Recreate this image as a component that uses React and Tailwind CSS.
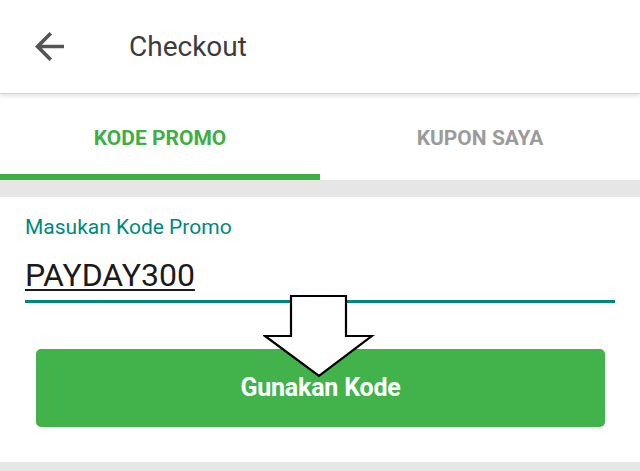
import React from 'react';

const BackArrow = () => (
  <svg width="29" height="29" viewBox="4 4 16 16" className="text-[#555555]">
    <path fill="currentColor" d="M20 11H7.83l5.59-5.59L12 4l-8 8 8 8 1.41-1.41L7.83 13H20v-2z" />
  </svg>
);

// hand-drawn annotation arrow over the button
const PointerArrow = () => (
  <svg width="112" height="84" viewBox="0 0 112 84" className="absolute left-[263px] top-[294px]">
    <polygon
      points="28,2 83,2 83,42 109,42 56,82 2,42 28,42"
      fill="white"
      stroke="black"
      strokeWidth="2.2"
      strokeLinejoin="miter"
    />
  </svg>
);

export default function App() {
  return (
    <div className="relative w-[640px] h-[471px] overflow-hidden bg-white font-['Roboto',sans-serif]">
      {/* Header */}
      <header className="relative z-10 h-[94px] flex items-center pl-[35px] bg-white border-b border-[#d4d4d4] shadow-[0_2px_4px_rgba(0,0,0,0.12)]">
        <BackArrow />
        <h1 className="ml-[65px] text-[28px] text-[#3c3c3c] leading-none">Checkout</h1>
      </header>

      {/* Tabs */}
      <div className="grid grid-cols-2 h-[86px]">
        <div className="flex flex-col">
          <div className="flex-1 flex items-center justify-center pt-[9px] text-[21px] font-bold text-[#3fae45]">
            KODE PROMO
          </div>
          <div className="h-[6px] bg-[#3fae45]" />
        </div>
        <div className="flex flex-col">
          <div className="flex-1 flex items-center justify-center pt-[9px] text-[21px] font-bold text-[#9b9b9b]">
            KUPON SAYA
          </div>
          <div className="h-[6px]" />
        </div>
      </div>

      <div className="h-[17px] bg-[#e6e6e6]" />

      {/* Promo form */}
      <div className="px-[25px] pt-[18px]">
        <label className="block text-[21px] leading-[25px] text-[#00897b]">Masukan Kode Promo</label>
        <div className="mt-[17px] text-[32px] leading-[36px] text-[#1a1a1a] underline underline-offset-[3px] decoration-[2px]">
          PAYDAY300
        </div>
        <div className="mt-[7px] h-[3px] bg-[#00897b]" />
      </div>

      <div className="pl-[36px] pr-[35px] pt-[46px]">
        <button className="w-full h-[78px] rounded-[5px] bg-[#42b34a] text-white text-[25px] font-bold tracking-[-0.2px]">
          Gunakan Kode
        </button>
      </div>

      <div className="absolute left-0 right-0 bottom-0 h-[9px] bg-[#e6e6e6]" />

      <PointerArrow />
    </div>
  );
}
